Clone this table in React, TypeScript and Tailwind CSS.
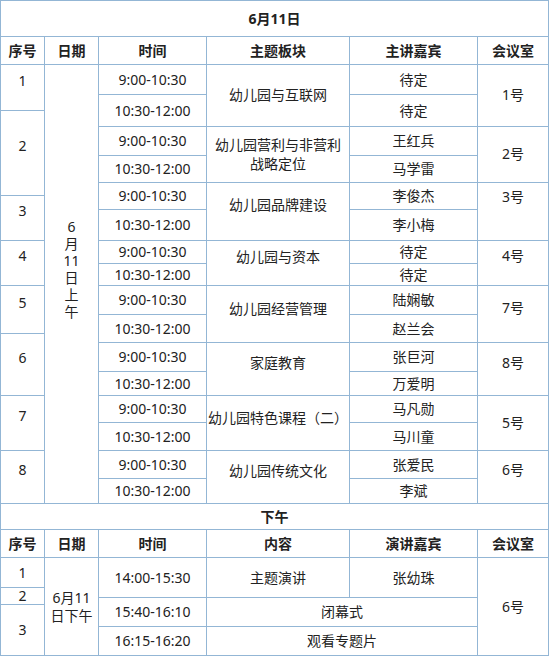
const line = "border-[#93b6d5]";
const cell = "border-r border-b border-[#93b6d5] flex items-center justify-center text-center";

type Group = {
  times: [number, number];
  topic: React.ReactNode;
  topicPad: string;
  speakers: [string, string];
  room: string;
  roomPad: string;
};

const morning: Group[] = [
  { times: [30, 32], topic: "幼儿园与互联网", topicPad: "pb-[2px]", speakers: ["待定", "待定"], room: "1号", roomPad: "pb-[2px]" },
  { times: [29, 27], topic: <>幼儿园营利与非营利<br />战略定位</>, topicPad: "pb-[2px]", speakers: ["王红兵", "马学雷"], room: "2号", roomPad: "pb-[2px]" },
  { times: [27, 31], topic: "幼儿园品牌建设", topicPad: "pb-[14px]", speakers: ["李俊杰", "李小梅"], room: "3号", roomPad: "pb-[30px]" },
  { times: [23, 22], topic: "幼儿园与资本", topicPad: "pb-[14px]", speakers: ["待定", "待定"], room: "4号", roomPad: "pb-[14px]" },
  { times: [29, 28], topic: "幼儿园经营管理", topicPad: "pb-[12px]", speakers: ["陆娴敏", "赵兰会"], room: "7号", roomPad: "pb-[12px]" },
  { times: [29, 24], topic: "家庭教育", topicPad: "pb-[14px]", speakers: ["张巨河", "万爱明"], room: "8号", roomPad: "pb-[12px]" },
  { times: [27, 28], topic: "幼儿园特色课程（二）", topicPad: "pb-[12px]", speakers: ["马凡勋", "马川童"], room: "5号", roomPad: "pb-[0px]" },
  { times: [28, 25], topic: "幼儿园传统文化", topicPad: "pb-[14px]", speakers: ["张爱民", "李斌"], room: "6号", roomPad: "pb-[14px]" },
];

const seqMorning = [
  { n: "1", h: 46 },
  { n: "2", h: 85 },
  { n: "3", h: 45 },
  { n: "4", h: 45 },
  { n: "5", h: 48 },
  { n: "6", h: 62 },
  { n: "7", h: 55 },
  { n: "8", h: 53 },
];

function Header({ labels }: { labels: string[] }) {
  const widths = ["w-[44px]", "w-[54px]", "w-[108px]", "w-[143px]", "w-[128px]", "w-[71px]"];
  return (
    <div className="flex h-[28px]">
      {labels.map((l, i) => (
        <div key={l} className={`${cell} ${widths[i]} font-bold`}>
          {l}
        </div>
      ))}
    </div>
  );
}

function MorningGroup({ g }: { g: Group }) {
  return (
    <div className="flex">
      <div className="flex w-[108px] flex-col">
        <div className={cell} style={{ height: g.times[0] }}>9:00-10:30</div>
        <div className={cell} style={{ height: g.times[1] }}>10:30-12:00</div>
      </div>
      <div className={`${cell} w-[143px] whitespace-nowrap leading-[19px] ${g.topicPad}`}>{g.topic}</div>
      <div className="flex w-[128px] flex-col">
        <div className={cell} style={{ height: g.times[0] }}>{g.speakers[0]}</div>
        <div className={cell} style={{ height: g.times[1] }}>{g.speakers[1]}</div>
      </div>
      <div className={`${cell} w-[71px] ${g.roomPad}`}>{g.room}</div>
    </div>
  );
}

export default function App() {
  return (
    <div className="h-[659px] w-[550px] bg-white font-['Noto_Sans','Noto_Sans_CJK_SC',sans-serif] text-[14px] leading-[18px] text-[#222]">
      <div className={`w-[549px] border-l border-t ${line}`}>
        <div className={`${cell} h-[36px] font-bold`}>6月11日</div>
        <Header labels={["序号", "日期", "时间", "主题板块", "主讲嘉宾", "会议室"]} />
        <div className="flex">
          <div className="flex w-[44px] flex-col">
            {seqMorning.map((s) => (
              <div key={s.n} className={`${cell} pb-[14px]`} style={{ height: s.h }}>
                {s.n}
              </div>
            ))}
          </div>
          <div className={`${cell} w-[54px] flex-col pb-[30px] leading-[17px]`}>
            <span>6</span>
            <span>月</span>
            <span>11</span>
            <span>日</span>
            <span>上</span>
            <span>午</span>
          </div>
          <div className="flex flex-col">
            {morning.map((g, i) => (
              <MorningGroup key={i} g={g} />
            ))}
          </div>
        </div>

        <div className={`${cell} h-[26px] font-bold`}>下午</div>
        <Header labels={["序号", "日期", "时间", "内容", "演讲嘉宾", "会议室"]} />
        <div className="flex">
          <div className="flex w-[44px] flex-col">
            <div className={`${cell} h-[30px]`}>1</div>
            <div className={`${cell} h-[17px]`}>2</div>
            <div className={`${cell} h-[51px]`}>3</div>
          </div>
          <div className={`${cell} w-[54px] flex-col leading-[18px]`}>
            <span>6月11</span>
            <span>日下午</span>
          </div>
          <div className="flex flex-col">
            <div className="flex h-[40px]">
              <div className={`${cell} w-[108px]`}>14:00-15:30</div>
              <div className={`${cell} w-[143px]`}>主题演讲</div>
              <div className={`${cell} w-[128px]`}>张幼珠</div>
            </div>
            <div className="flex h-[29px]">
              <div className={`${cell} w-[108px]`}>15:40-16:10</div>
              <div className={`${cell} w-[271px]`}>闭幕式</div>
            </div>
            <div className="flex h-[29px]">
              <div className={`${cell} w-[108px]`}>16:15-16:20</div>
              <div className={`${cell} w-[271px]`}>观看专题片</div>
            </div>
          </div>
          <div className={`${cell} w-[71px]`}>6号</div>
        </div>
      </div>
    </div>
  );
}
